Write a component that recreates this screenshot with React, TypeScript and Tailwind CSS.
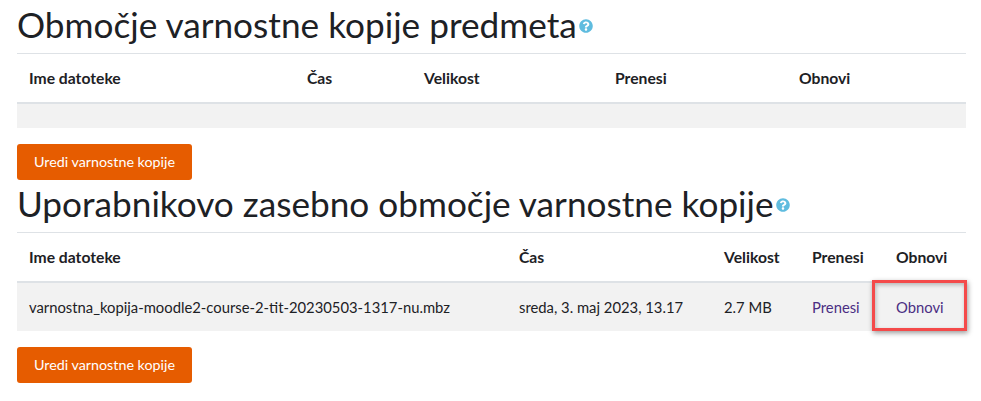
import { FaQuestionCircle } from "react-icons/fa";

const UrediButton = () => (
  <button className="block h-9 w-[175px] rounded-[3px] bg-[#e65c00] text-center text-[14.3px] text-white">
    Uredi varnostne kopije
  </button>
);

const Heading = ({ children }: { children: string }) => (
  <h2 className="flex items-center text-[35.2px] leading-[42px] font-normal text-[#1d2125]">
    {children}
    <FaQuestionCircle className="mt-[4px] ml-[2px] h-[14px] w-[14px] text-[#5fbcdf]" />
  </h2>
);

const th = "h-[49px] px-3 pt-[2px] text-left text-[15.7px] font-bold text-[#1d2125]";
const thTall = "h-[50px] px-3 pt-[2px] text-left text-[15.7px] font-bold text-[#1d2125]";
const td = "h-[49px] px-3 text-[14.8px] text-[#1d2125]";
const link = "text-[#4b2e83]";

const App = () => {
  return (
    <div className="relative h-[401px] w-[981px] overflow-hidden bg-white px-[17px] pt-[3px] font-['Lato','Liberation_Sans',sans-serif]">
      <Heading>Območje varnostne kopije predmeta</Heading>
      <table className="mt-[8px] w-[949px] table-fixed border-collapse">
        <colgroup>
          <col className="w-[278px]" />
          <col className="w-[117px]" />
          <col className="w-[191px]" />
          <col className="w-[184px]" />
          <col className="w-[179px]" />
        </colgroup>
        <thead>
          <tr className="border-t border-b-2 border-t-[#dee2e6] border-b-[#dee2e6]">
            <th className={th}>Ime datoteke</th>
            <th className={th}>Čas</th>
            <th className={th}>Velikost</th>
            <th className={th}>Prenesi</th>
            <th className={th}>Obnovi</th>
          </tr>
        </thead>
        <tbody>
          <tr className="h-[25px] bg-[#f2f2f2]">
            <td colSpan={5} />
          </tr>
        </tbody>
      </table>
      <div className="mt-4">
        <UrediButton />
      </div>
      <div className="mt-[2px]">
        <Heading>Uporabnikovo zasebno območje varnostne kopije</Heading>
      </div>
      <table className="mt-[8px] w-[949px] table-fixed border-collapse">
        <colgroup>
          <col className="w-[490px]" />
          <col className="w-[205px]" />
          <col className="w-[88px]" />
          <col className="w-[84px]" />
          <col className="w-[82px]" />
        </colgroup>
        <thead>
          <tr className="border-t border-b-2 border-t-[#dee2e6] border-b-[#dee2e6]">
            <th className={thTall}>Ime datoteke</th>
            <th className={thTall}>Čas</th>
            <th className={thTall}>Velikost</th>
            <th className={thTall}>Prenesi</th>
            <th className={thTall}>Obnovi</th>
          </tr>
        </thead>
        <tbody>
          <tr className="bg-[#f2f2f2]">
            <td className={td}>varnostna_kopija-moodle2-course-2-tit-20230503-1317-nu.mbz</td>
            <td className={td}>sreda, 3. maj 2023, 13.17</td>
            <td className={td}>2.7 MB</td>
            <td className={`${td} ${link}`}>Prenesi</td>
            <td className={`${td} ${link}`}>Obnovi</td>
          </tr>
        </tbody>
      </table>
      <div className="mt-4">
        <UrediButton />
      </div>
      {/* rdeč okvir okoli gumba Obnovi */}
      <div className="absolute top-[280px] left-[872px] h-[51px] w-[95px] border-[3px] border-[#f44a4a] shadow-[1px_2px_5px_rgba(0,0,0,0.4),inset_1px_2px_4px_rgba(0,0,0,0.25)]" />
    </div>
  );
};

export default App;
